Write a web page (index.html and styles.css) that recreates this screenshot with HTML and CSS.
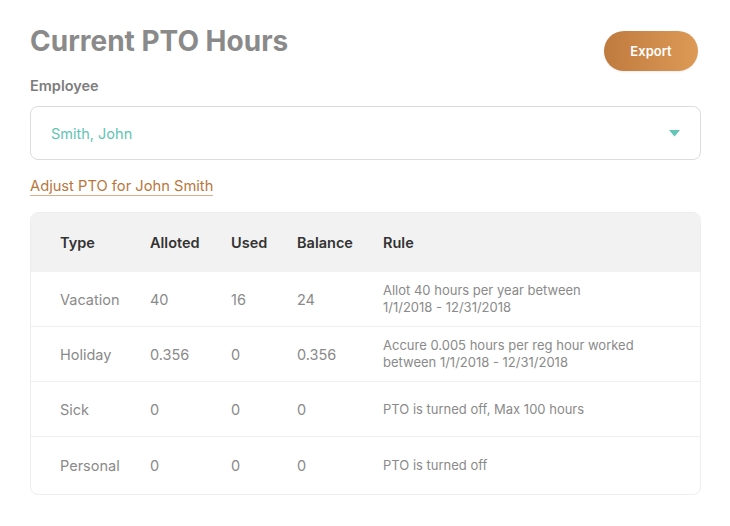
FILE: index.html
```html
<!DOCTYPE html>
<html>
<head>
<meta charset="utf-8">
<link rel="stylesheet" href="styles.css">
</head>
<body>
<div class="page">
  <div class="top">
    <h1 class="title">Current PTO Hours</h1>
    <button class="export">Export</button>
  </div>
  <div class="label">Employee</div>
  <div class="select">
    <span class="select-value">Smith, John</span>
    <svg class="caret" width="11" height="7" viewBox="0 0 11 7"><path d="M0 0 H11 L5.5 6.5 Z" fill="#62c6b7"/></svg>
  </div>
  <a class="adjust" href="#">Adjust PTO for John Smith</a>
  <div class="table">
    <div class="row head">
      <div class="c type">Type</div>
      <div class="c alloted">Alloted</div>
      <div class="c used">Used</div>
      <div class="c balance">Balance</div>
      <div class="c rule">Rule</div>
    </div>
    <div class="row">
      <div class="c type">Vacation</div>
      <div class="c alloted">40</div>
      <div class="c used">16</div>
      <div class="c balance">24</div>
      <div class="c rule small">Allot 40 hours per year between<br>1/1/2018 - 12/31/2018</div>
    </div>
    <div class="row">
      <div class="c type">Holiday</div>
      <div class="c alloted">0.356</div>
      <div class="c used">0</div>
      <div class="c balance">0.356</div>
      <div class="c rule small">Accure 0.005 hours per reg hour worked<br>between 1/1/2018 - 12/31/2018</div>
    </div>
    <div class="row">
      <div class="c type">Sick</div>
      <div class="c alloted">0</div>
      <div class="c used">0</div>
      <div class="c balance">0</div>
      <div class="c rule small">PTO is turned off, Max 100 hours</div>
    </div>
    <div class="row last">
      <div class="c type">Personal</div>
      <div class="c alloted">0</div>
      <div class="c used">0</div>
      <div class="c balance">0</div>
      <div class="c rule small">PTO is turned off</div>
    </div>
  </div>
</div>
</body>
</html>
```
FILE: styles.css
```css
* { box-sizing: border-box; }
html, body { margin: 0; padding: 0; background: #fff; }
body { font-family: "Inter", "Liberation Sans", sans-serif; }
.page { width: 730px; padding: 24px 29px 0 30px; }
.top { display: flex; justify-content: space-between; align-items: flex-start; height: 51px; }
.title { margin: 0; font-size: 28px; font-weight: 700; color: #8a8a8a; line-height: 34px; letter-spacing: 0; }
.export {
  margin-top: 7px; margin-right: 3px;
  width: 94px; height: 40px; border: none; border-radius: 20px;
  background: linear-gradient(90deg, #bf7a3e, #dd9a56);
  color: #fff; font-family: inherit; font-weight: 600; font-size: 13px;
  box-shadow: 0 1px 2px rgba(0,0,0,0.08);
}
.label { font-size: 14.5px; font-weight: 600; color: #7d7d7d; line-height: 20px; height: 31px; padding-top: 1px; }
.select {
  height: 54px; border: 1px solid #dcdcdc; border-radius: 8px;
  display: flex; align-items: center; justify-content: space-between;
  padding: 0 20px 0 20px;
}
.select-value { color: #5fc4b4; font-size: 14.5px; }
.adjust {
  display: inline-block; margin-top: 18px;
  color: #b9773d; font-size: 14.7px; line-height: 17px; text-decoration: none;
  border-bottom: 1px solid #dcae86;
}
.table {
  margin-top: 16px; border: 1px solid #eeeeee; border-radius: 8px; overflow: hidden;
}
.row { display: flex; align-items: center; height: 55px; border-bottom: 1px solid #efefef; color: #8a8a8a; font-size: 14.5px; }
.row.last { border-bottom: none; height: 57px; }
.row.head { background: #f2f2f2; height: 59px; color: #333; font-weight: 600; border-bottom: none; }
.c { flex: none; }
.type { width: 119px; padding-left: 29px; }
.alloted { width: 81px; }
.used { width: 66px; }
.balance { width: 86px; }
.rule { flex: 1; }
.small { font-size: 13px; line-height: 17px; }
```
